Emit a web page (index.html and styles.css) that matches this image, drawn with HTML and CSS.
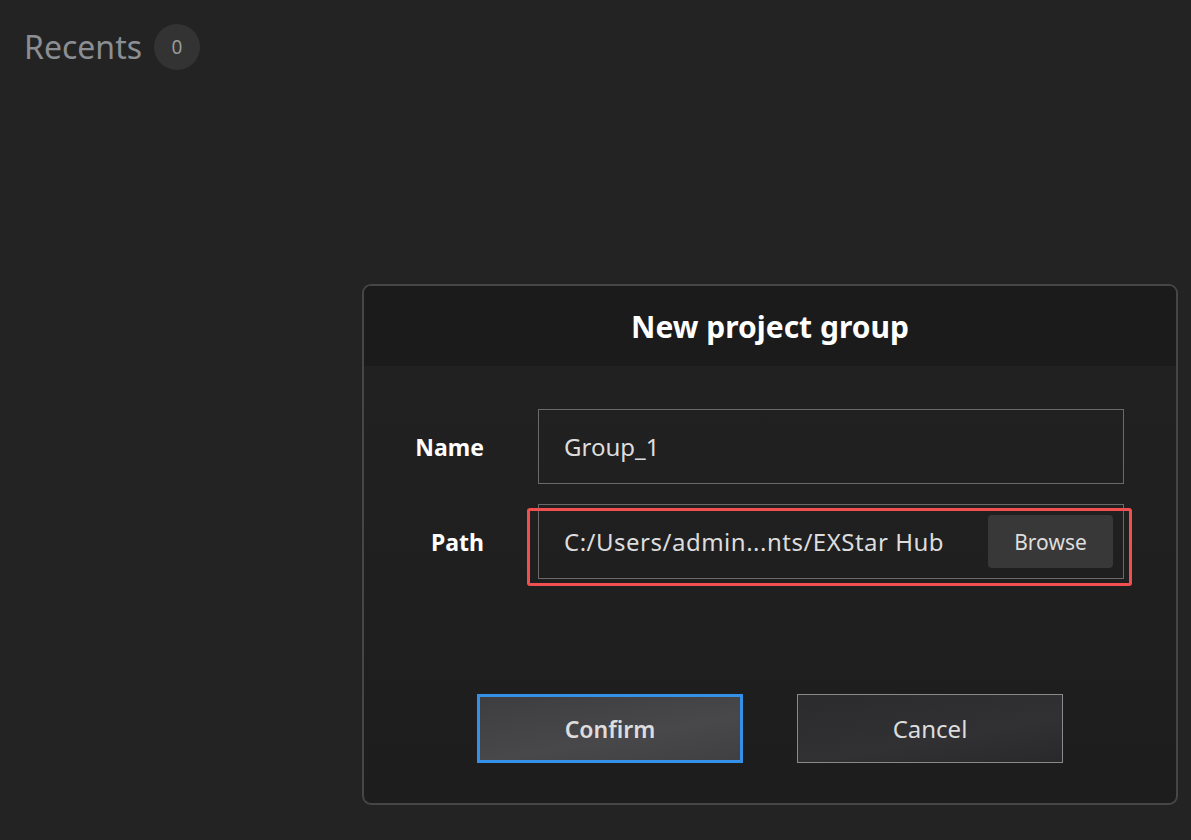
FILE: index.html
```html
<!DOCTYPE html>
<html lang="en">
<head>
    <meta charset="UTF-8">
    <title>New project group</title>
    <link rel="stylesheet" href="styles.css">
</head>
<body>

    <div class="recents">
        <span class="recents-title">Recents</span>
        <span class="recents-count">0</span>
    </div>

    <!-- New project group dialog -->
    <div class="dialog">
        <div class="dialog-header">New project group</div>

        <div class="dialog-body">
            <div class="form-row">
                <label class="form-label">Name</label>
                <div class="field">Group_1</div>
            </div>

            <div class="form-row">
                <label class="form-label">Path</label>
                <div class="field field-path">
                    <span class="path-text">C:/Users/admin...nts/EXStar Hub</span>
                    <button class="browse-btn">Browse</button>
                    <!-- red annotation frame -->
                    <div class="highlight"></div>
                </div>
            </div>

            <div class="dialog-actions">
                <button class="btn btn-confirm">Confirm</button>
                <button class="btn btn-cancel">Cancel</button>
            </div>
        </div>
    </div>

</body>
</html>
```

FILE: styles.css
```css
/* Page */
body {
    margin: 0;
    background-color: #232323;
    font-family: 'Noto Sans', 'Open Sans', sans-serif;
    color: #ddd;
    overflow: hidden;
}

/* Recents heading */
.recents {
    display: flex;
    align-items: center;
    gap: 12px;
    padding: 24px 0 0 24px;
    height: 46px;
}
.recents-title {
    font-size: 32px;
    color: #8b8e93;
    line-height: 46px;
}
.recents-count {
    width: 46px;
    height: 46px;
    border-radius: 50%;
    background-color: #333;
    color: #9a9a9a;
    font-size: 19px;
    display: flex;
    align-items: center;
    justify-content: center;
}

/* Dialog */
.dialog {
    margin: 214px 0 0 362px;
    width: 812px;
    border: 2px solid #464646;
    border-radius: 9px;
    overflow: hidden;
    background: linear-gradient(#222 0%, #1d1d1d 100%);
}
.dialog-header {
    height: 80px;
    background-color: #1b1b1b;
    color: #fff;
    font-size: 30px;
    font-weight: bold;
    display: flex;
    align-items: center;
    justify-content: center;
}
.dialog-body {
    padding: 43px 0 40px 0;
}

/* Form rows */
.form-row {
    display: grid;
    grid-template-columns: 120px 586px;
    column-gap: 54px;
    align-items: center;
    margin-bottom: 20px;
}
.form-label {
    text-align: right;
    font-size: 23px;
    font-weight: bold;
    color: #fff;
}
.field {
    position: relative;
    height: 73px;
    border: 1px solid #6a6a6a;
    display: flex;
    align-items: center;
    padding-left: 25px;
    font-size: 24px;
    color: #ddd;
}
.field-path {
    justify-content: space-between;
    padding-right: 10px;
}
.path-text {
    letter-spacing: 0.5px;
}
.browse-btn {
    width: 125px;
    height: 53px;
    border: none;
    border-radius: 4px;
    background-color: #383838;
    color: #ddd;
    font-family: inherit;
    font-size: 21px;
}

/* Red annotation frame over the path field */
.highlight {
    position: absolute;
    left: -12px;
    top: 3px;
    width: 599px;
    height: 72px;
    border: 3px solid #f25050;
    border-radius: 3px;
}

/* Buttons */
.dialog-actions {
    display: flex;
    justify-content: center;
    gap: 54px;
    margin-top: 115px;
}
.btn {
    width: 266px;
    height: 69px;
    font-family: inherit;
    font-size: 24px;
    color: #ddd;
}
.btn-confirm {
    border: 3px solid #3590e8;
    background: linear-gradient(170deg, #3e3e41, #48484b 60%, #404043);
    font-weight: 600;
    font-size: 23px;
}
.btn-cancel {
    border: 1px solid #8a8a8a;
    background: linear-gradient(170deg, #2b2b2d, #313134 60%, #29292b);
}
```
